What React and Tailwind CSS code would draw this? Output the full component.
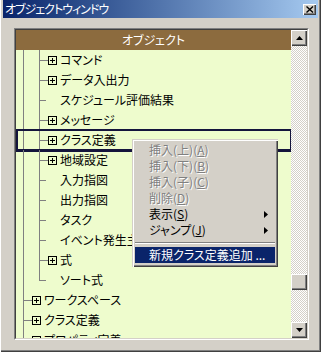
import React from "react";

const rows = [
  { lvl: 2, box: true, text: "コマンド" },
  { lvl: 2, box: true, text: "データ入出力" },
  { lvl: 2, box: false, text: "スケジュール評価結果" },
  { lvl: 2, box: true, text: "メッセージ" },
  { lvl: 2, box: true, text: "クラス定義", focus: true },
  { lvl: 2, box: true, text: "地域設定" },
  { lvl: 2, box: false, text: "入力指図" },
  { lvl: 2, box: false, text: "出力指図" },
  { lvl: 2, box: false, text: "タスク" },
  { lvl: 2, box: false, text: "イベント発生主体" },
  { lvl: 2, box: true, text: "式" },
  { lvl: 2, box: false, text: "ソート式", last: true },
  { lvl: 1, box: true, text: "ワークスペース" },
  { lvl: 1, box: true, text: "クラス定義" },
  { lvl: 1, box: true, text: "プロパティ定義" },
];

function PlusBox() {
  return (
    <div className="mt-[6px] w-[9px] h-[9px] shrink-0 border border-black flex items-center justify-center">
      <svg width="7" height="7" viewBox="0 0 7 7">
        <rect x="1" y="3" width="5" height="1" fill="#000" />
        <rect x="3" y="1" width="1" height="5" fill="#000" />
      </svg>
    </div>
  );
}

function Guide({ elbow, last, short }) {
  if (!elbow) {
    return (
      <div className="w-[16px] h-full shrink-0 pl-[7px]">
        <div className="h-full border-l border-[#808080]" />
      </div>
    );
  }
  return (
    <div className="w-[16px] h-full shrink-0 pl-[7px] flex flex-col">
      <div className={`h-[11px] border-l border-b border-[#808080] ${short ? "w-[7px]" : "w-full"}`} />
      <div className={`flex-1 ${last ? "" : "border-l border-[#808080]"}`} />
    </div>
  );
}

function Row({ lvl, box, text, last, focus }) {
  return (
    <div className="relative flex items-start h-[20px] shrink-0">
      {lvl === 1 ? (
        <Guide elbow />
      ) : (
        <>
          <Guide />
          <Guide elbow last={last} short={!box} />
        </>
      )}
      {box ? <PlusBox /> : <div className="w-[9px] shrink-0" />}
      <span className="ml-[3px] leading-[20px] text-black whitespace-nowrap">{text}</span>
      {focus && (
        <div className="absolute -top-px -bottom-[2px] -left-px -right-px border-2 border-l-[3px] border-b-[3px] border-[#14143c] pointer-events-none" />
      )}
    </div>
  );
}

function Btn3D({ className = "", children }) {
  return (
    <div
      className={`bg-[#d4d0c8] shadow-[inset_1px_1px_#ffffff,inset_-1px_-1px_#404040,inset_-2px_-2px_#808080] flex items-center justify-center ${className}`}
    >
      {children}
    </div>
  );
}

function MenuItem({ label, u, tail = "", disabled, arrow, active }) {
  const color = active
    ? "bg-[#0a246a] text-white"
    : disabled
    ? "text-[#808080] [text-shadow:1px_1px_0_#ffffff]"
    : "text-black";
  return (
    <div className={`h-[16px] flex items-center pl-[14px] pr-[5px] ${color}`}>
      <span className="leading-[16px] whitespace-nowrap">
        {label}
        {u !== undefined && (
          <>
            (<u>{u}</u>)
          </>
        )}
        {tail}
      </span>
      {arrow && (
        <svg className="ml-auto mr-[2px]" width="4" height="7" viewBox="0 0 4 7">
          <path d="M0 0 L4 3.5 L0 7 Z" fill="#000" />
        </svg>
      )}
    </div>
  );
}

export default function App() {
  return (
    <div className="relative w-[321px] h-[352px] bg-[#d4d0c8] overflow-hidden font-['Noto_Sans_CJK_JP',sans-serif] [font-feature-settings:'palt'] text-[12px] shadow-[inset_1px_0_#ffffff,inset_-1px_-1px_#404040,inset_-2px_-2px_#808080]">
      {/* title bar */}
      <div className="mx-[3px] h-[18px] flex items-center bg-linear-to-r from-[#0a246a] to-[#a6caf0] pl-[2px]">
        <span className="text-white leading-[18px] whitespace-nowrap tracking-[-1px]">オブジェクトウィンドウ</span>
        <Btn3D className="ml-auto mr-[2px] w-[13px] h-[11px]">
          <svg width="8" height="7" viewBox="0 0 8 7">
            <path d="M0.5 0.5 L7 6.5 M7 0.5 L0.5 6.5" stroke="#000" strokeWidth="1.4" />
          </svg>
        </Btn3D>
      </div>

      {/* tree panel */}
      <div className="ml-[14px] mt-[10px] w-[295px] h-[312px] border border-[#808080] border-r-white border-b-white">
        <div className="w-full h-full border border-[#404040] border-r-[#d4d0c8] border-b-[#d4d0c8] flex">
          <div className="w-[275px] h-full bg-[#eefccd] flex flex-col overflow-hidden">
            <div className="h-[20px] shrink-0 bg-[#8c6b3e] flex items-center justify-center">
              <span className="text-white leading-[20px]">オブジェクト</span>
            </div>
            {rows.map((r, i) => (
              <Row key={i} {...r} />
            ))}
          </div>
          {/* scrollbar */}
          <div className="w-[16px] h-full flex flex-col bg-[repeating-conic-gradient(#d4d0c8_0_25%,#ffffff_0_50%)] bg-[length:2px_2px]">
            <Btn3D className="w-[16px] h-[16px] shrink-0">
              <svg width="7" height="4" viewBox="0 0 7 4">
                <path d="M3.5 0 L7 4 L0 4 Z" fill="#000" />
              </svg>
            </Btn3D>
            <div className="flex-1 flex flex-col">
              <div className="h-[228px]" />
              <Btn3D className="w-[16px] h-[16px]" />
            </div>
            <Btn3D className="w-[16px] h-[16px] shrink-0">
              <svg width="7" height="4" viewBox="0 0 7 4">
                <path d="M0 0 L7 0 L3.5 4 Z" fill="#000" />
              </svg>
            </Btn3D>
          </div>
        </div>
      </div>

      {/* context menu */}
      <div className="absolute left-[132px] top-[139px] w-[146px] h-[128px] bg-[#d4d0c8] p-[3px] shadow-[inset_1px_1px_#d4d0c8,inset_2px_2px_#ffffff,inset_-1px_-1px_#404040,inset_-2px_-2px_#808080]">
        <MenuItem label="挿入(上)" u="A" disabled />
        <MenuItem label="挿入(下)" u="B" disabled />
        <MenuItem label="挿入(子)" u="C" disabled />
        <MenuItem label="削除" u="D" disabled />
        <MenuItem label="表示" u="S" arrow />
        <MenuItem label="ジャンプ" u="J" arrow />
        <div className="h-[9px] flex flex-col justify-center">
          <div className="h-px bg-[#808080]" />
          <div className="h-px bg-white" />
        </div>
        <MenuItem label="新規クラス定義追加 ..." active />
      </div>
    </div>
  );
}
